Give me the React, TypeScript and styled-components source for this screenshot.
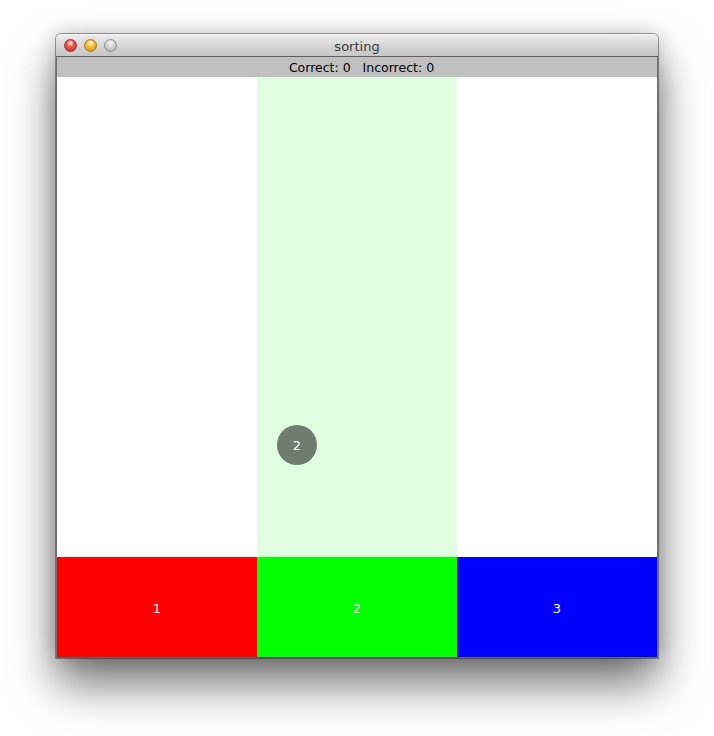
import React from "react";
import styled, { createGlobalStyle } from "styled-components";

const Global = createGlobalStyle`
  html, body { margin: 0; padding: 0; background: #ffffff; }
  body { font-family: "DejaVu Sans", "Liberation Sans", sans-serif; }
`;

const Page = styled.div`
  padding: 34px 0 0 56px;
  width: 714px;
  height: 736px;
  box-sizing: border-box;
`;

const Window = styled.div`
  width: 602px;
  display: flex;
  flex-direction: column;
  border-radius: 5px 5px 0 0;
  box-shadow: 0 0 0 1px rgba(0,0,0,0.35), 0 26px 46px rgba(0,0,0,0.55), 0 0 20px rgba(0,0,0,0.2);
  background: #c0c0c0;
`;

const TitleBar = styled.div`
  position: relative;
  height: 21px;
  border-radius: 5px 5px 0 0;
  background: linear-gradient(#ececec, #d2d2d2 60%, #c6c6c6);
  border-top: 1px solid #f4f4f4;
  border-bottom: 1px solid #5e5e5e;
  display: flex;
  align-items: center;
  justify-content: center;
`;

const Lights = styled.div`
  position: absolute;
  left: 8px;
  top: 4px;
  display: flex;
  gap: 7px;
`;

const Light = styled.span<{ $c1: string; $c2: string; $edge: string }>`
  width: 13px;
  height: 13px;
  border-radius: 50%;
  box-sizing: border-box;
  border: 1px solid ${(p) => p.$edge};
  background: radial-gradient(circle at 50% 30%, #ffffff 0, ${(p) => p.$c1} 35%, ${(p) => p.$c2} 100%);
`;

const Title = styled.div`
  font-size: 13px;
  color: #3a3a3a;
  margin-top: 1px;
`;

const StatusBar = styled.div`
  height: 20px;
  background: #c0c0c0;
  border-left: 1px solid #707070;
  border-right: 1px solid #707070;
  display: flex;
  align-items: center;
  justify-content: center;
  padding-left: 9px;
  padding-top: 1px;
  box-sizing: border-box;
  font-size: 12.5px;
  color: #000;
  white-space: pre;
`;

const Board = styled.div`
  height: 580px;
  display: grid;
  grid-template-columns: repeat(3, 200px);
  border-left: 1px solid #707070;
  border-right: 1px solid #707070;
  border-bottom: 1px solid #606060;
`;

const Column = styled.div`
  display: flex;
  flex-direction: column;
`;

const Lane = styled.div<{ $active?: boolean }>`
  position: relative;
  flex: 1;
  background: ${(p) => (p.$active ? "#e0fde0" : "#ffffff")};
`;

const Bin = styled.div<{ $color: string }>`
  height: 100px;
  padding-top: 2px;
  box-sizing: border-box;
  background: ${(p) => p.$color};
  color: #ffffff;
  font-size: 13px;
  display: flex;
  align-items: center;
  justify-content: center;
`;

const Ball = styled.div`
  position: absolute;
  width: 40px;
  height: 40px;
  border-radius: 50%;
  background: #6f7d6e;
  color: #ffffff;
  font-size: 13px;
  display: flex;
  align-items: center;
  justify-content: center;
`;

const bins = [
  { label: "1", color: "#ff0000" },
  { label: "2", color: "#00ff00" },
  { label: "3", color: "#0000ff" },
];

export default function App() {
  return (
    <Page>
      <Global />
      <Window>
        <TitleBar>
          <Lights>
            <Light $c1="#f25a55" $c2="#c4201b" $edge="#a3312e" />
            <Light $c1="#f8c13b" $c2="#d28d0c" $edge="#a9791e" />
            <Light $c1="#dcdcdc" $c2="#a8a8a8" $edge="#8e8e8e" />
          </Lights>
          <Title>sorting</Title>
        </TitleBar>
        <StatusBar>{"Correct: 0   Incorrect: 0"}</StatusBar>
        <Board>
          {bins.map((b, i) => (
            <Column key={b.label}>
              <Lane $active={i === 1}>
                {i === 1 && <Ball style={{ left: 20, top: 348 }}>2</Ball>}
              </Lane>
              <Bin $color={b.color}>{b.label}</Bin>
            </Column>
          ))}
        </Board>
      </Window>
    </Page>
  );
}
